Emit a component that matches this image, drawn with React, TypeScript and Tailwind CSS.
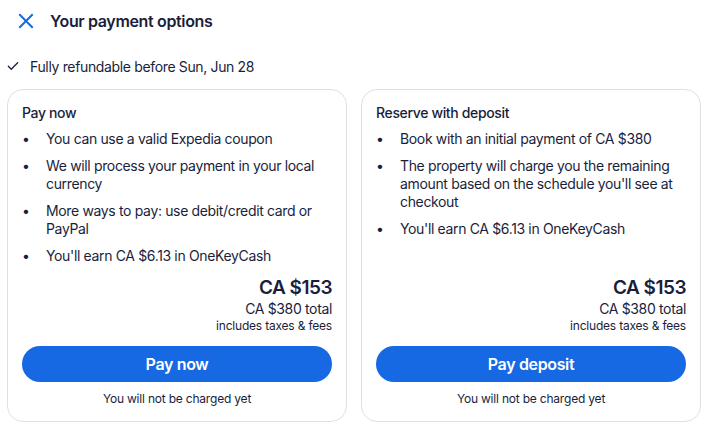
import React from "react";

const Check = () => (
  <svg width="14" height="14" viewBox="0 0 24 24" fill="none" stroke="#191e3b" strokeWidth="2.2" strokeLinecap="round" strokeLinejoin="round">
    <path d="M4 12.5l5 5L20 6.5" />
  </svg>
);

const Close = () => (
  <svg width="16" height="16" viewBox="0 0 16 16" fill="none" stroke="#1668e3" strokeWidth="2" strokeLinecap="square">
    <path d="M2 2l12 12M14 2L2 14" />
  </svg>
);

function Card({ title, items, button }: { title: string; items: string[]; button: string }) {
  return (
    <div className="flex-1 border border-[#dfe0e4] rounded-[16px] px-[14px] pt-[14px] pb-[14px] flex flex-col">
      <div className="text-[14px] font-medium leading-[18px]">{title}</div>
      <ul className="mt-[8px] flex flex-col gap-[9px]">
        {items.map((t) => (
          <li key={t} className="flex text-[14px] leading-[18px]">
            <span className="w-[24px] shrink-0">•</span>
            <span>{t}</span>
          </li>
        ))}
      </ul>
      <div className="flex-1" />
      <div className="flex flex-col items-end">
        <div className="text-[19px] font-semibold leading-[24px] tracking-[-0.5px]">CA $153</div>
        <div className="text-[14px] leading-[18px]">CA $380 total</div>
        <div className="text-[12px] leading-[16px] tracking-[-0.2px]">includes taxes &amp; fees</div>
      </div>
      <button className="mt-[12px] h-[36px] w-full rounded-full bg-[#1668e3] text-white text-[16px] font-semibold">
        {button}
      </button>
      <div className="text-[12px] leading-[16px] text-center mt-[9px] tracking-[-0.2px]">You will not be charged yet</div>
    </div>
  );
}

export default function App() {
  return (
    <div className="w-[710px] h-[428px] bg-white text-[#191e3b] overflow-hidden tracking-[-0.35px]" style={{ fontFamily: "Inter, 'Noto Sans', sans-serif" }}>
      <div className="flex items-center h-[42px] pl-[18px]">
        <Close />
        <span className="ml-[16px] text-[16px] font-semibold">Your payment options</span>
      </div>
      <div className="flex items-center h-[16px] mt-[16px] pl-[6px] text-[14px]">
        <Check />
        <span className="ml-[10px]">Fully refundable before Sun, Jun 28</span>
      </div>
      <div className="flex gap-[14px] pl-[7px] pr-[9px] mt-[15px] h-[333px]">
        <Card
          title="Pay now"
          items={[
            "You can use a valid Expedia coupon",
            "We will process your payment in your local currency",
            "More ways to pay: use debit/credit card or PayPal",
            "You'll earn CA $6.13 in OneKeyCash",
          ]}
          button="Pay now"
        />
        <Card
          title="Reserve with deposit"
          items={[
            "Book with an initial payment of CA $380",
            "The property will charge you the remaining amount based on the schedule you'll see at checkout",
            "You'll earn CA $6.13 in OneKeyCash",
          ]}
          button="Pay deposit"
        />
      </div>
    </div>
  );
}
